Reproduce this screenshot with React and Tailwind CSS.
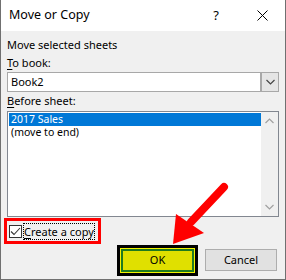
import React from "react";

const font = { fontFamily: '"Noto Sans", "Open Sans", sans-serif' };

const Chevron = ({ up, className }) => (
  <svg width="9" height="6" viewBox="0 0 9 6" className={className}>
    <path
      d={up ? "M0.5 5 L4.5 1 L8.5 5" : "M0.5 1 L4.5 5 L8.5 1"}
      fill="none"
      stroke="currentColor"
      strokeWidth="1.2"
    />
  </svg>
);

const App = () => {
  return (
    <div
      className="relative w-[286px] h-[280px] bg-[#f0f0f0] border-x border-b border-[#707070] text-[11px] text-black overflow-hidden whitespace-nowrap"
      style={font}
    >
      {/* title bar */}
      <div className="flex items-center h-[31px] bg-white pl-[8px]">
        <span className="text-[12.5px]">Move or Copy</span>
        <span className="ml-auto mr-[38px] text-[13px]">?</span>
        <svg width="11" height="11" viewBox="0 0 11 11" className="mr-[17px]">
          <path d="M0.5 0.5 L10.5 10.5 M10.5 0.5 L0.5 10.5" stroke="#000" strokeWidth="1" />
        </svg>
      </div>

      <div className="px-[6px]">
        <div className="mt-[6px] h-[16px] leading-[16px]">Move selected sheets</div>
        <div className="mt-[2px] h-[16px] leading-[16px]">
          <span className="underline underline-offset-2">T</span>o book:
        </div>

        {/* dropdown */}
        <div className="mt-[1px] flex h-[20px] bg-white border border-[#a8a8a8]">
          <div className="flex-1 pl-[3px] leading-[18px]">Book2</div>
          <div className="w-[18px] flex items-center justify-center bg-[#e5e5e5] border-l-2 border-[#a8a8a8] text-[#444]">
            <Chevron />
          </div>
        </div>

        <div className="mt-[1px] h-[16px] leading-[16px]">
          <span className="underline underline-offset-2">B</span>efore sheet:
        </div>

        {/* listbox */}
        <div className="mt-[2px] flex h-[106px] bg-white border border-[#828790]">
          <div className="flex-1 pt-[1px] pl-[1px] text-[10.5px]">
            <div className="h-[13px] leading-[13px] bg-[#0078d7] text-white pl-[2px] overflow-hidden">2017 Sales</div>
            <div className="h-[13px] leading-[13px] pl-[2px] overflow-hidden">(move to end)</div>
          </div>
          <div className="w-[17px] bg-[#f0f0f0] flex flex-col items-center justify-between py-[6px] text-[#a0a0a0]">
            <Chevron up />
            <Chevron />
          </div>
        </div>

        {/* create a copy */}
        <div className="-ml-[3px] mt-px w-[97px] h-[26px] border-[3px] border-[#ff0000] flex items-center pl-[2px]">
          <div className="shrink-0 w-[13px] h-[13px] border border-[#333] bg-white flex items-center justify-center">
            <svg width="11" height="9" viewBox="0 0 11 9">
              <path d="M1 4.5 L4 7.5 L10 1" fill="none" stroke="#333" strokeWidth="1.1" />
            </svg>
          </div>
          <div className="ml-[1px] border border-dotted border-black leading-[15px]">
            <span className="underline underline-offset-2">C</span>reate a copy
          </div>
        </div>

        {/* buttons */}
        <div className="flex items-center justify-end h-[32px] pr-[2px] gap-[7px]">
          <div className="w-[81px] h-[31px] border-[3px] border-black">
            <div className="h-full border border-[#f2f200]">
              <div className="h-full border-2 border-[#1f7a1f] bg-[#e0e000] flex items-center justify-center">
                OK
              </div>
            </div>
          </div>
          <div className="w-[72px] h-[22px] bg-[#e1e1e1] border border-[#adadad] flex items-center justify-center">
            Cancel
          </div>
        </div>
      </div>

      {/* red arrow annotation */}
      <svg className="absolute left-0 top-0 pointer-events-none" width="286" height="280">
        <path d="M223 187 L190 222" stroke="#ff0000" strokeWidth="8" strokeLinecap="round" />
        <path d="M172 244 L175 214 L203 233 Z" fill="#ff0000" />
      </svg>
    </div>
  );
};

export default App;
